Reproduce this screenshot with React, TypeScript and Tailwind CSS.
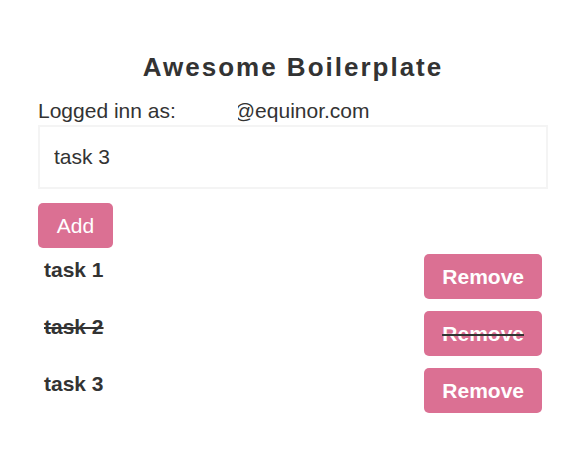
type Task = { id: number; text: string; done: boolean };

const tasks: Task[] = [
  { id: 1, text: "task 1", done: false },
  { id: 2, text: "task 2", done: true },
  { id: 3, text: "task 3", done: false },
];

function TaskRow({ task }: { task: Task }) {
  return (
    <li
      className={
        task.done
          ? "flex items-start justify-between p-1.5 font-bold line-through"
          : "flex items-start justify-between p-1.5 font-bold"
      }
    >
      <span className="pt-[3px]">{task.text}</span>
      <button
        type="button"
        className="rounded-[5px] bg-[#db7093] px-[18px] py-[10px] text-white"
      >
        {task.done ? (
          <span className="line-through decoration-[#333]">Remove</span>
        ) : (
          "Remove"
        )}
      </button>
    </li>
  );
}

export default function App() {
  return (
    <main className="bg-white pt-[50px] pr-10 pb-12 pl-[38px] font-['Liberation_Sans',Arial,sans-serif] text-[21px] leading-[25px] text-[#333]">
      <h1 className="text-center text-[26px] leading-[34px] font-bold tracking-[2px]">
        Awesome Boilerplate
      </h1>
      <div className="mt-[14px] flex">
        <span>Logged inn as:</span>
        {/* The user name is masked; the mask overlaps the edge of the address. */}
        <span className="z-10 -mr-1 w-[62px] bg-white" aria-hidden="true" />
        <span>@equinor.com</span>
      </div>
      <form onSubmit={(event) => event.preventDefault()}>
        <input
          type="text"
          aria-label="New task"
          defaultValue="task 3"
          className="mt-0.5 block h-[64px] w-full border-2 border-[#f4f4f4] bg-white px-[14px] outline-none"
        />
        <button
          type="submit"
          className="mt-[14px] block min-w-[75px] rounded-[5px] bg-[#db7093] px-[18px] py-[10px] text-white"
        >
          Add
        </button>
      </form>
      <ul>
        {tasks.map((task) => (
          <TaskRow key={task.id} task={task} />
        ))}
      </ul>
    </main>
  );
}
